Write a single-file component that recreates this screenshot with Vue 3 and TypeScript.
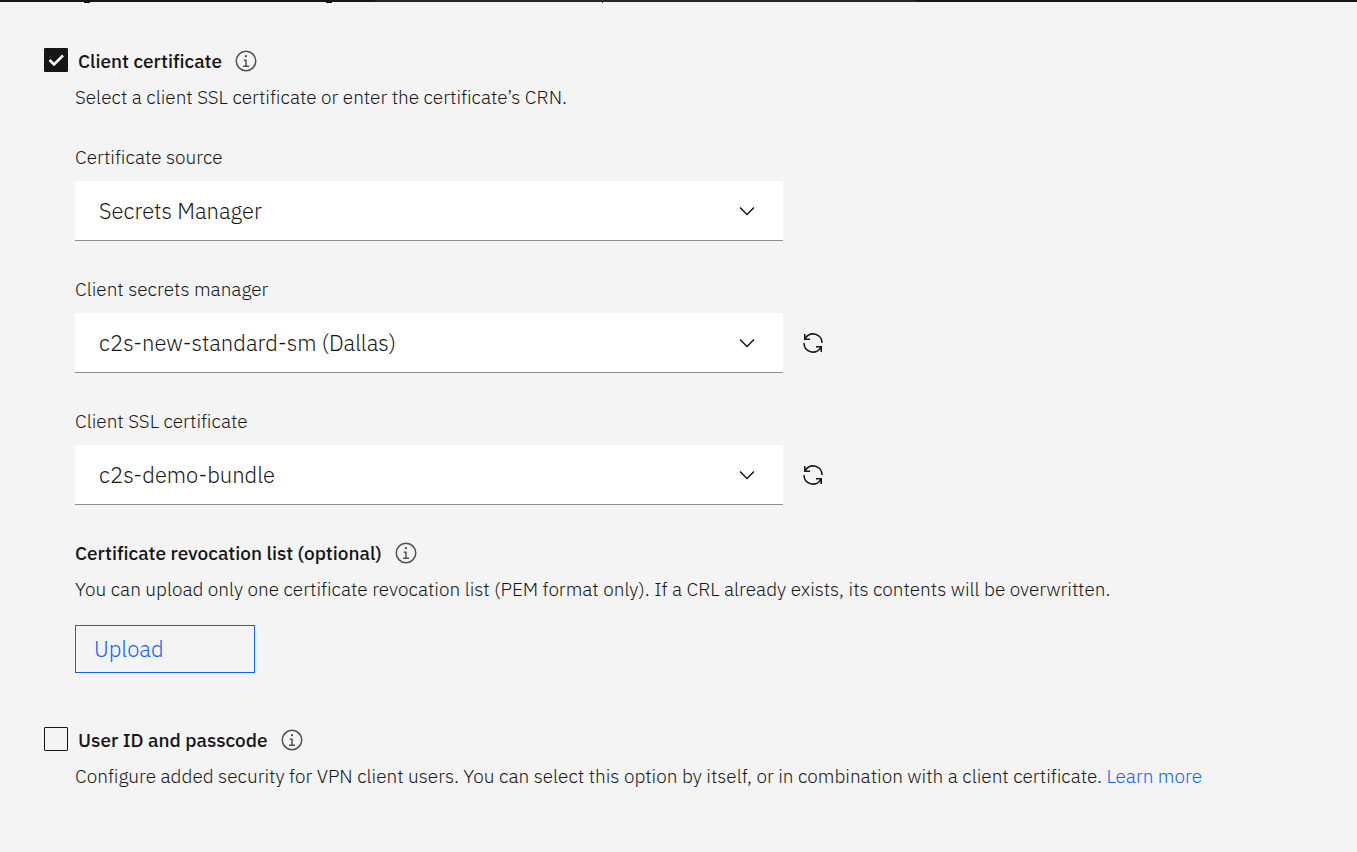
<script setup lang="ts">
import { ref } from 'vue'

interface Field {
  id: string
  label: string
  options: string[]
  refresh: boolean
}

const fields: Field[] = [
  { id: 'source', label: 'Certificate source', options: ['Secrets Manager'], refresh: false },
  { id: 'manager', label: 'Client secrets manager', options: ['c2s-new-standard-sm (Dallas)'], refresh: true },
  { id: 'certificate', label: 'Client SSL certificate', options: ['c2s-demo-bundle'], refresh: true },
]

const selected = ref<Record<string, string>>({
  source: 'Secrets Manager',
  manager: 'c2s-new-standard-sm (Dallas)',
  certificate: 'c2s-demo-bundle',
})
const useCertificate = ref(true)
const usePasscode = ref(false)

const infoPath =
  'M17 22V14H13V16H15V22H12V24H20V22ZM16 8A1.5 1.5 0 1 0 17.5 9.5A1.5 1.5 0 0 0 16 8ZM16 30A14 14 0 1 1 30 16A14 14 0 0 1 16 30ZM16 4A12 12 0 1 0 28 16A12 12 0 0 0 16 4Z'
</script>

<template>
  <main class="page">
    <div class="topbar">
      <svg width="640" height="3" viewBox="0 0 640 3" aria-hidden="true">
        <path d="M84 2h6v1h-6zM326 2h6v1h-6z" fill="#161616" />
        <path d="M602 2h1v1h-1z" fill="#1a1a8c" />
      </svg>
    </div>

    <section class="group">
      <div class="head">
        <span class="check">
          <input id="use-certificate" v-model="useCertificate" type="checkbox" />
          <svg v-if="useCertificate" width="24" height="24" viewBox="0 0 24 24" aria-hidden="true">
            <path d="M5.5 12L10 16.5L19 7.5" fill="none" stroke="#fff" stroke-width="2.5" />
          </svg>
        </span>
        <label class="title" for="use-certificate">Client certificate</label>
        <button class="icon info" type="button" aria-label="About client certificates">
          <svg width="24" height="24" viewBox="0 0 32 32"><path :d="infoPath" /></svg>
        </button>
      </div>

      <div class="body">
        <p class="text">Select a client SSL certificate or enter the certificate’s CRN.</p>

        <div v-for="field in fields" :key="field.id" class="field">
          <label class="text" :for="field.id">{{ field.label }}</label>
          <div class="control">
            <div class="dropdown">
              <select :id="field.id" v-model="selected[field.id]">
                <option v-for="option in field.options" :key="option">{{ option }}</option>
              </select>
              <svg width="24" height="24" viewBox="0 0 16 16" aria-hidden="true">
                <path d="M8 11L3 6L3.7 5.3L8 9.6L12.3 5.3L13 6Z" />
              </svg>
            </div>
            <button v-if="field.refresh" class="icon" type="button" :aria-label="`Refresh ${field.label}`">
              <svg width="24" height="24" viewBox="0 0 32 32">
                <path d="M12 10H6.78A11 11 0 0 1 27 16H29A13 13 0 0 0 6 7.68V4H4V12H12ZM20 22H25.22A11 11 0 0 1 5 16H3A13 13 0 0 0 26 24.32V28H28V20H20Z" />
              </svg>
            </button>
          </div>
        </div>

        <div class="revocation">
          <div class="subhead">
            <h3 class="title">Certificate revocation list (optional)</h3>
            <button class="icon info" type="button" aria-label="About certificate revocation lists">
              <svg width="24" height="24" viewBox="0 0 32 32"><path :d="infoPath" /></svg>
            </button>
          </div>
          <p class="text">
            You can upload only one certificate revocation list (PEM format only). If a CRL already exists, its contents will be overwritten.
          </p>
          <button class="upload" type="button">Upload</button>
        </div>
      </div>
    </section>

    <section class="group">
      <div class="head">
        <span class="check">
          <input id="use-passcode" v-model="usePasscode" type="checkbox" />
          <svg v-if="usePasscode" width="24" height="24" viewBox="0 0 24 24" aria-hidden="true">
            <path d="M5.5 12L10 16.5L19 7.5" fill="none" stroke="#fff" stroke-width="2.5" />
          </svg>
        </span>
        <label class="title" for="use-passcode">User ID and passcode</label>
        <button class="icon info" type="button" aria-label="About user ID and passcode">
          <svg width="24" height="24" viewBox="0 0 32 32"><path :d="infoPath" /></svg>
        </button>
      </div>
      <div class="body">
        <p class="text">
          Configure added security for VPN client users. You can select this option by itself, or in combination with a client certificate.
          <a href="#">Learn more</a>
        </p>
      </div>
    </section>
  </main>
</template>

<style>
body {
  margin: 0;
  background: #f4f4f4;
}
</style>

<style scoped>
.page {
  position: relative;
  box-sizing: border-box;
  min-height: 100vh;
  padding: 48px 44px;
  display: flex;
  flex-direction: column;
  gap: 54px;
  background: #f4f4f4;
  color: #161616;
  font-family: 'IBM Plex Sans', 'Open Sans', 'Noto Sans', sans-serif;
  font-size: 19px;
  font-weight: 300;
  font-variant-ligatures: none;
  line-height: 24px;
}

.topbar {
  position: absolute;
  inset: 0 0 auto;
  height: 2px;
  background: linear-gradient(90deg, #161616 375px, #262626 375px 916px, #161616 916px);
}

.topbar svg {
  display: block;
}

.group {
  display: flex;
  flex-direction: column;
  gap: 11px;
}

.head {
  display: flex;
  align-items: center;
  height: 26px;
}

.check {
  position: relative;
  align-self: flex-start;
  width: 24px;
  height: 24px;
  margin-right: 10px;
}

.check input {
  appearance: none;
  box-sizing: border-box;
  display: block;
  width: 24px;
  height: 24px;
  margin: 0;
  border: 1px solid #161616;
  border-radius: 1px;
}

.check input:checked {
  background: #161616;
}

.check svg {
  position: absolute;
  inset: 0;
  pointer-events: none;
}

.title {
  margin: 0;
  font-size: 19px;
  font-weight: 500;
}

.icon {
  display: block;
  width: 24px;
  height: 24px;
  padding: 0;
  border: 0;
  background: none;
  fill: #161616;
}

.icon svg {
  display: block;
}

.info {
  margin-left: 12px;
  fill: #525252;
}

.body {
  padding-left: 31px;
}

.text {
  display: block;
  margin: 0;
}

.field {
  margin-top: 36px;
}

.control {
  display: flex;
  align-items: center;
  gap: 18px;
  margin-top: 12px;
}

.dropdown {
  position: relative;
  flex: 0 1 708px;
}

.dropdown select {
  appearance: none;
  display: block;
  box-sizing: border-box;
  width: 100%;
  height: 60px;
  padding: 0 64px 0 24px;
  border: 0;
  border-bottom: 1px solid #8d8d8d;
  border-radius: 0;
  background: #fff;
  color: #161616;
  font: inherit;
  font-size: 22px;
  line-height: 32px;
}

.dropdown svg {
  position: absolute;
  top: 18px;
  right: 24px;
  fill: #161616;
  pointer-events: none;
}

.revocation {
  margin-top: 36px;
}

.subhead {
  display: flex;
  align-items: center;
  margin-bottom: 12px;
}

.upload {
  display: block;
  width: 180px;
  height: 48px;
  margin-top: 24px;
  padding: 0 18px;
  border: 1px solid #0f62fe;
  background: transparent;
  color: #0f62fe;
  font: inherit;
  font-size: 22px;
  text-align: left;
}

a {
  color: #0f62fe;
  text-decoration: none;
}
</style>
